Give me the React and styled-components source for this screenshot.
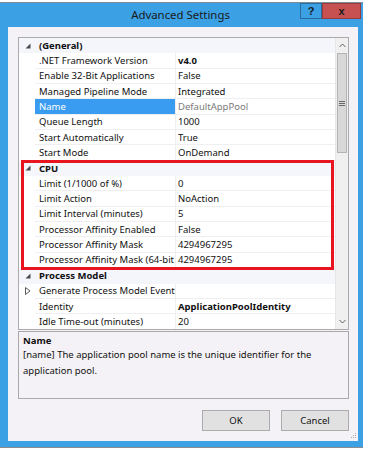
import styled, { createGlobalStyle } from 'styled-components'

const GlobalStyle = createGlobalStyle`
  * {
    margin: 0;
    padding: 0;
    box-sizing: border-box;
  }
  body {
    background: #ffffff;
    font-family: 'Noto Sans', 'Open Sans', sans-serif;
    font-size: 9.5px;
    color: #111111;
    width: 368px;
    height: 450px;
    overflow: hidden;
  }
`

const ROW_H = '15.35px'

const groups = [
  {
    name: '(General)',
    rows: [
      { label: '.NET Framework Version', value: 'v4.0', bold: true },
      { label: 'Enable 32-Bit Applications', value: 'False' },
      { label: 'Managed Pipeline Mode', value: 'Integrated' },
      { label: 'Name', value: 'DefaultAppPool', selected: true },
      { label: 'Queue Length', value: '1000' },
      { label: 'Start Automatically', value: 'True' },
      { label: 'Start Mode', value: 'OnDemand' },
    ],
  },
  {
    name: 'CPU',
    rows: [
      { label: 'Limit (1/1000 of %)', value: '0' },
      { label: 'Limit Action', value: 'NoAction' },
      { label: 'Limit Interval (minutes)', value: '5' },
      { label: 'Processor Affinity Enabled', value: 'False' },
      { label: 'Processor Affinity Mask', value: '4294967295' },
      { label: 'Processor Affinity Mask (64-bit option)', value: '4294967295' },
    ],
  },
  {
    name: 'Process Model',
    rows: [
      { label: 'Generate Process Model Event Log Entry', value: '', collapsed: true },
      { label: 'Identity', value: 'ApplicationPoolIdentity', bold: true },
      { label: 'Idle Time-out (minutes)', value: '20' },
    ],
  },
]

const Page = styled.div`
  padding-top: 2px;
`

const Window = styled.div`
  width: 363px;
  background: #3ba0e4;
  border-top: 1px solid #7d8c99;
  border-bottom: 1px solid #8c8c8c;
  padding: 0 5px 6px 8px;
  display: flex;
  flex-direction: column;
`

const TitleBar = styled.div`
  height: 24px;
  margin-left: -8px;
  margin-right: -3px;
  display: grid;
  grid-template-columns: 1fr auto 1fr;
  align-items: start;
`

const Title = styled.div`
  grid-column: 2;
  font-size: 11.4px;
  line-height: 24px;
  color: #1a1a1a;
`

const CaptionButtons = styled.div`
  grid-column: 3;
  justify-self: end;
  display: flex;
`

const CaptionButton = styled.div`
  width: ${(p) => p.$w}px;
  height: 16px;
  display: flex;
  align-items: center;
  justify-content: center;
  background: ${(p) => p.$bg};
  border: 1px solid ${(p) => p.$border};
  font-family: 'Liberation Sans', Arial, sans-serif;
  font-weight: bold;
  font-size: 11px;
  color: #1a1a1a;
`

const Client = styled.div`
  position: relative;
  height: 414px;
  background: #f4f2f6;
  padding: 10px 9px 10px 10px;
  display: flex;
  flex-direction: column;
`

const GridBox = styled.div`
  height: 293px;
  border: 1px solid #ababab;
  background: #ffffff;
  display: flex;
  overflow: hidden;
`

const List = styled.div`
  position: relative;
  flex: 1;
  overflow: hidden;
`

const CatRow = styled.div`
  height: ${ROW_H};
  display: grid;
  grid-template-columns: 16px 1fr;
  align-items: center;
  background: #f5f5fc;
  font-weight: bold;
`

const CatName = styled.span`
  padding-left: 4px;
`

const PropRow = styled.div`
  height: ${ROW_H};
  display: grid;
  grid-template-columns: 16px 141px 1fr;
`

const Gutter = styled.div`
  display: flex;
  align-items: center;
  justify-content: center;
  padding-left: 1px;
`

const Cell = styled.div`
  display: flex;
  align-items: center;
  white-space: nowrap;
  overflow: hidden;
  border-bottom: 1px solid #efeff2;
`

const Label = styled(Cell)`
  padding-left: 4px;
  border-right: 1px solid #efeff2;
  background: ${(p) => (p.$selected ? '#3a9cf0' : 'transparent')};
  color: ${(p) => (p.$selected ? '#ffffff' : 'inherit')};
`

const Value = styled(Cell)`
  padding-left: 2px;
  font-weight: ${(p) => (p.$bold ? 'bold' : 'normal')};
  color: ${(p) => (p.$muted ? '#7a7a7a' : 'inherit')};
`

const Highlight = styled.div`
  position: absolute;
  left: 2px;
  top: 122px;
  width: 313px;
  height: 110px;
  border: 3px solid #e8141f;
  pointer-events: none;
`

const ScrollBar = styled.div`
  width: 13px;
  background: #f0f0f0;
  border-left: 1px solid #e6e6e6;
  display: flex;
  flex-direction: column;
`

const ScrollArrow = styled.div`
  height: 15px;
  display: flex;
  align-items: center;
  justify-content: center;
`

const Thumb = styled.div`
  height: 100px;
  margin: 0 1px;
  background: #d8d8d8;
  border: 1px solid #b4b4b4;
  display: flex;
  align-items: center;
  justify-content: center;
`

const Track = styled.div`
  flex: 1;
`

const Description = styled.div`
  margin-top: 1px;
  height: 68px;
  border: 1px solid #a9a9a9;
  padding: 3px 4px 0 4px;
`

const DescTitle = styled.div`
  font-weight: bold;
  line-height: 11px;
`

const DescText = styled.div`
  margin-top: 1px;
  line-height: 15.5px;
`

const ButtonRow = styled.div`
  margin-top: 11px;
  display: flex;
  justify-content: flex-end;
  gap: 11px;
`

const Button = styled.div`
  width: 68px;
  height: 21px;
  display: flex;
  align-items: center;
  justify-content: center;
  background: #e1e1e1;
  border: 1px solid #acacac;
`

const Grip = styled.svg`
  position: absolute;
  right: 1px;
  bottom: 2px;
`

const ExpandedIcon = () => (
  <svg width="6" height="6" viewBox="0 0 6 6">
    <polygon points="5.5,0.5 5.5,5.5 0.5,5.5" fill="#4a4a4a" />
  </svg>
)

const CollapsedIcon = () => (
  <svg width="6" height="8" viewBox="0 0 6 8">
    <polygon points="0.5,0.5 5,4 0.5,7.5" fill="none" stroke="#5a5a5a" />
  </svg>
)

const Chevron = ({ down }) => (
  <svg width="7" height="5" viewBox="0 0 7 5">
    <path
      d={down ? 'M0.5 1 L3.5 4 L6.5 1' : 'M0.5 4 L3.5 1 L6.5 4'}
      stroke="#606060"
      fill="none"
    />
  </svg>
)

const GripLines = () => (
  <svg width="6" height="5" viewBox="0 0 6 5">
    <path d="M0 0.5 H6 M0 2.5 H6 M0 4.5 H6" stroke="#6a6a6a" />
  </svg>
)

const App = () => {
  return (
    <>
      <GlobalStyle />
      <Page>
        <Window>
          <TitleBar>
            <Title>Advanced Settings</Title>
            <CaptionButtons>
              <CaptionButton $w={22} $bg="#3ba0e4" $border="#2a6c9c">?</CaptionButton>
              <CaptionButton $w={39} $bg="#c75050" $border="#9a3a3a">x</CaptionButton>
            </CaptionButtons>
          </TitleBar>
          <Client>
            <GridBox>
              <List>
                {groups.map((g) => (
                  <div key={g.name}>
                    <CatRow>
                      <Gutter>
                        <ExpandedIcon />
                      </Gutter>
                      <CatName>{g.name}</CatName>
                    </CatRow>
                    {g.rows.map((r) => (
                      <PropRow key={r.label}>
                        <Gutter>{r.collapsed && <CollapsedIcon />}</Gutter>
                        <Label $selected={r.selected}>{r.label}</Label>
                        <Value $bold={r.bold} $muted={r.selected}>
                          {r.value}
                        </Value>
                      </PropRow>
                    ))}
                  </div>
                ))}
                <Highlight />
              </List>
              <ScrollBar>
                <ScrollArrow>
                  <Chevron />
                </ScrollArrow>
                <Thumb>
                  <GripLines />
                </Thumb>
                <Track />
                <ScrollArrow>
                  <Chevron down />
                </ScrollArrow>
              </ScrollBar>
            </GridBox>
            <Description>
              <DescTitle>Name</DescTitle>
              <DescText>
                [name] The application pool name is the unique identifier for the application pool.
              </DescText>
            </Description>
            <ButtonRow>
              <Button>OK</Button>
              <Button>Cancel</Button>
            </ButtonRow>
            <Grip width="6" height="6" viewBox="0 0 6 6">
              <rect x="4" y="0" width="1" height="1" fill="#a8a8a8" />
              <rect x="2" y="2" width="1" height="1" fill="#a8a8a8" />
              <rect x="4" y="2" width="1" height="1" fill="#a8a8a8" />
              <rect x="0" y="4" width="1" height="1" fill="#a8a8a8" />
              <rect x="2" y="4" width="1" height="1" fill="#a8a8a8" />
              <rect x="4" y="4" width="1" height="1" fill="#a8a8a8" />
            </Grip>
          </Client>
        </Window>
      </Page>
    </>
  )
}

export default App
